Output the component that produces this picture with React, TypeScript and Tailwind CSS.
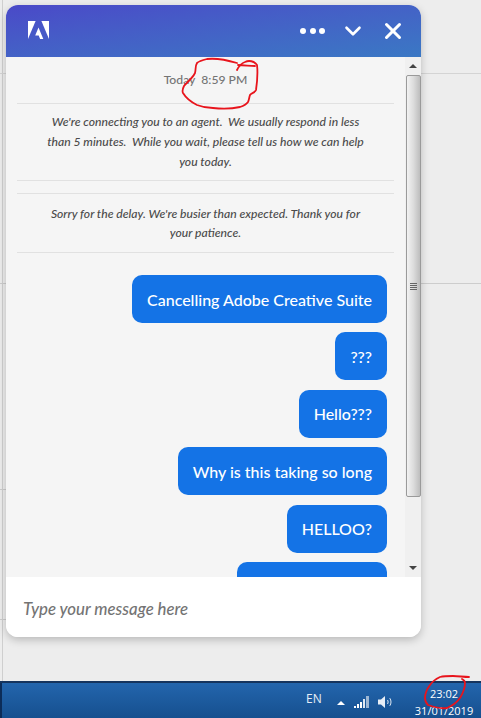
import { ChevronDown, X } from 'lucide-react';

const messages = [
  'Cancelling Adobe Creative Suite',
  '???',
  'Hello???',
  'Why is this taking so long',
  'HELLOO?',
];

function AdobeLogo() {
  return (
    <svg width="21" height="18" viewBox="0 0 21 18" fill="white">
      <path d="M0 0h7.6L0 18z" />
      <path d="M13.4 0H21v18z" />
      <path d="M10.5 6.6L15.3 18h-3.2l-1.4-3.6H7.2z" />
    </svg>
  );
}

function Scrollbar() {
  return (
    <div className="w-4 shrink-0 flex flex-col items-center bg-[#f0f0f0]">
      <div className="h-[18px] w-full flex items-center justify-center">
        <div className="w-0 h-0 border-x-[4px] border-x-transparent border-b-[4px] border-b-[#444]" />
      </div>
      <div className="h-[422px] w-[15px] rounded-[2px] border border-[#9a9a9a] bg-gradient-to-r from-[#f2f2f2] via-[#dcdcdc] to-[#bdbdbd] flex flex-col items-center justify-center gap-[1px]">
        <div className="w-[7px] h-[1px] bg-[#666]" />
        <div className="w-[7px] h-[1px] bg-[#666]" />
        <div className="w-[7px] h-[1px] bg-[#666]" />
        <div className="w-[7px] h-[1px] bg-[#666]" />
      </div>
      <div className="flex-1 flex items-end pb-[7px]">
        <div className="w-0 h-0 border-x-[4px] border-x-transparent border-t-[4px] border-t-[#444]" />
      </div>
    </div>
  );
}

function ChatWindow() {
  return (
    <div className="absolute left-[6px] top-[5px] w-[415px] h-[632px] rounded-xl bg-white shadow-[0_3px_8px_rgba(0,0,0,0.22)] flex flex-col overflow-hidden">
      {/* Header */}
      <div className="h-[52px] shrink-0 bg-gradient-to-br from-[#4a49c8] to-[#3a78c4] flex items-center pl-[22px] pr-[15px] text-white">
        <div className="-mt-[2px]">
          <AdobeLogo />
        </div>
        <div className="ml-auto flex items-center">
          <div className="flex gap-[3.5px]">
            <div className="w-[6px] h-[6px] rounded-full bg-white" />
            <div className="w-[6px] h-[6px] rounded-full bg-white" />
            <div className="w-[6px] h-[6px] rounded-full bg-white" />
          </div>
          <ChevronDown className="ml-[15px] w-[26px] h-[26px]" strokeWidth={2.4} />
          <X className="ml-[14px] w-[26px] h-[26px]" strokeWidth={2.8} />
        </div>
      </div>

      {/* Transcript */}
      <div className="flex-1 flex min-h-0 bg-[#f5f5f5]">
        <div className="flex-1 overflow-hidden pl-[11px] pr-[11px]">
          <div className="h-[47px] border-b border-[#e1e1e1] flex items-center justify-center text-[12.2px] font-medium text-[#747474] whitespace-pre">
            {'Today  8:59 PM'}
          </div>
          <div className="h-[77px] border-b border-[#e1e1e1] flex items-center justify-center text-center text-[12.15px] leading-[20px] italic font-medium text-[#4b4b4b]">
            <p className="whitespace-pre">
              {"We're connecting you to an agent.  We usually respond in less\nthan 5 minutes.  While you wait, please tell us how we can help\nyou today."}
            </p>
          </div>
          <div className="mt-[12px] h-[60px] border-y border-[#e1e1e1] flex items-center justify-center text-center text-[12.15px] leading-[19px] italic font-medium text-[#4b4b4b]">
            <p className="whitespace-pre">
              {"Sorry for the delay. We're busier than expected. Thank you for\nyour patience."}
            </p>
          </div>
          <div className="mt-[22px] flex flex-col items-end gap-[9.4px] pr-[7px]">
            {messages.map((m, i) => (
              <div
                key={i}
                className="h-[48px] shrink-0 px-[15px] pt-[1px] rounded-[10px] bg-[#1473e6] text-white text-[16px] font-medium flex items-center whitespace-nowrap"
              >
                {m}
              </div>
            ))}
            <div className="h-[48px] w-[150px] shrink-0 rounded-[10px] bg-[#1473e6]" />
          </div>
        </div>
        <Scrollbar />
      </div>

      {/* Input */}
      <div className="h-[60px] shrink-0 bg-white flex items-center pl-[17px] pt-[3px] text-[16.8px] italic font-medium text-[#747474]">
        Type your message here
      </div>
    </div>
  );
}

function Taskbar() {
  return (
    <div className="h-[37px] shrink-0 border-t-2 border-[#15345e] bg-gradient-to-b from-[#2365ad] to-[#16508f] flex items-center text-white font-['Open_Sans',sans-serif]">
      <div className="w-[2px] self-stretch bg-[#0c2c58]" />
      <span className="ml-[304px] -mt-[3px] text-[12px] text-[#e8eef6]">EN</span>
      <div className="ml-[15px] mt-[4px] w-0 h-0 border-x-[4px] border-x-transparent border-b-[4px] border-b-white" />
      <svg className="ml-[9px] mt-[3px]" width="16" height="12" viewBox="0 0 16 12">
        <rect x="0" y="10" width="2" height="2" fill="#fff" />
        <rect x="3" y="8" width="2" height="4" fill="#fff" />
        <rect x="6" y="6" width="2" height="6" fill="#fff" />
        <rect x="9" y="3" width="2" height="9" fill="#dfe8f2" />
        <rect x="12" y="0" width="3" height="12" fill="#9db7d4" />
      </svg>
      <svg className="ml-[8px] mt-[2px]" width="16" height="14" viewBox="0 0 16 14" fill="none">
        <path d="M0 4.5h3L7 1v12L3 9.5H0z" fill="#e8eef6" />
        <path d="M9.5 5c.8 1.2.8 2.8 0 4M11.8 3.2c1.6 2.2 1.6 5.4 0 7.6" stroke="#dfe8f2" strokeWidth="1" />
      </svg>
      <div className="ml-auto mr-[8px] w-[58px] flex flex-col items-center text-[11px] leading-[17px] pt-[3px] whitespace-nowrap">
        <span>23:02</span>
        <span>31/01/2019</span>
      </div>
    </div>
  );
}

export default function App() {
  return (
    <div className="relative w-[481px] h-[718px] flex flex-col bg-[#ededed] overflow-hidden font-['Lato','Open_Sans',sans-serif]">
      <div className="flex-1 relative">
        {/* Page behind the chat window */}
        <div className="absolute left-[2px] top-0 bottom-0 w-[1px] bg-[#cfcfcf]" />
        <div className="absolute left-0 top-[73px] w-full h-[1px] bg-[#d4d4d4]" />
        <div className="absolute left-0 top-[283px] w-full h-[1px] bg-[#cdcdcd]" />
        <div className="absolute left-0 top-[489px] w-[6px] h-[1px] bg-[#cdcdcd]" />
        <div className="absolute left-0 top-[619px] w-[6px] h-[1px] bg-[#cdcdcd]" />
        <ChatWindow />
      </div>
      <Taskbar />

      {/* Red marker scribbles */}
      <svg className="absolute left-0 top-0 pointer-events-none" width="481" height="718" fill="none" stroke="#e8141c" strokeWidth="1.8" strokeLinecap="round" strokeLinejoin="round">
        <path d="M237 70c2-4 5-7 8-8 4-2 9-1 12 3 1 8 0 18-1 25-1 3-5 3-6 5-1 3-1 5-2 7-2 3-5 4-8 5-9 2-18 2-27 1-6 0-11-1-16-3-6-3-11-7-14-12-1-2 0-5 1-7 3-4 8-7 11-13 1-3 0-7 2-10 2-2 6-3 10-4 9-1 20 1 30 4" />
        <path d="M238 65c6 0 12 1 17 1" />
        <path d="M469 677c-5 0-11-1-16-1-5 0-9 0-13 1-4 2-8 5-10 8-3 4-5 9-5 13 0 3 1 5 3 7 6 2 13 4 19 3 5-2 10-6 13-10 3-5 5-10 5-15 0-2-1-3-3-4" />
      </svg>
    </div>
  );
}
